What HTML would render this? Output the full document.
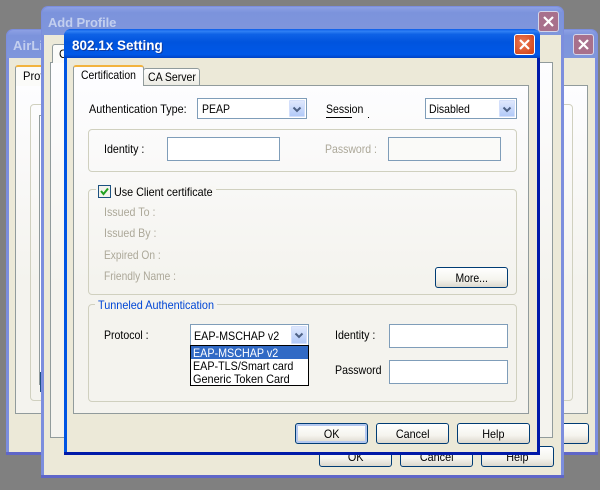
<!DOCTYPE html>
<html><head><meta charset="utf-8">
<style>
html,body{margin:0;padding:0}
body{width:600px;height:490px;background:#808080;position:relative;overflow:hidden;font:12px "Liberation Sans",sans-serif;color:#000}
div{position:absolute;box-sizing:border-box}
.t{white-space:nowrap;line-height:14px;height:14px;transform-origin:0 50%}
.d{color:#ACA899}
.win{border-radius:7px 7px 0 0}
.x{border:1px solid #fff;border-radius:3px}
.x svg{position:absolute;left:0;top:0}
.grp{border:1px solid #D0D0BF;border-radius:4px}
.inp{background:#fff;border:1px solid #7F9DB9}
.sel{background:#fff;border:1px solid #7F9DB9}
.sb{top:1px;bottom:1px;right:1px;width:16px;background:linear-gradient(#DFE8FD,#B2CAF8);border:1px solid #D3DFFB;border-radius:1px}
.sb svg{position:absolute;left:1px;top:3px}
.btn{border:1px solid #003C74;border-radius:3px;background:linear-gradient(#fff 0,#F5F4EE 60%,#DCD8CE 100%);text-align:center;line-height:21px;height:21px;width:73px}
.btn span{display:inline-block;transform:scaleX(.9)}
</style></head><body>

<!-- back window -->
<div class="win" style="left:6px;top:29px;width:592px;height:426px;background:#7C8EDE"></div>
<div style="left:6px;top:452px;width:592px;height:3px;background:#5F66C8"></div>
<div style="left:9px;top:58px;width:586px;height:394px;background:#ECE9D8"></div>
<div class="win" style="left:7px;top:30px;width:590px;height:28px;background:linear-gradient(#8CA0E4,#7C93DC 20%,#7F96DC)"></div>
<div class="t" style="left:13px;top:39px;color:#C3CFEF;font-weight:bold;font-size:13px;letter-spacing:.1px">AirLink</div>
<div class="x" style="left:573px;top:34px;width:21px;height:21px;background:#A8708C;border-color:#D5D5E8"><svg width="19" height="19"><path d="M5 5l9 9M14 5l-9 9" stroke="#fff" stroke-width="2.2"/></svg></div>
<div style="left:15px;top:85px;width:573px;height:329px;background:linear-gradient(#FDFDFF,#F4F3EE 60%);border:1px solid #919B9C"></div>
<div style="left:15px;top:65px;width:40px;height:21px;background:#FBFBF9;border:1px solid #919B9C;border-bottom:0;border-top:2px solid #F2B33E;border-radius:3px 3px 0 0"></div>
<div class="t" style="left:23px;top:69px;transform:scaleX(.93)">Prof</div>
<div class="grp" style="left:30px;top:104px;width:543px;height:297px"></div>
<div style="left:39px;top:115px;width:30px;height:270px;border:1px solid #919B9C;background:#fff"></div>
<div style="left:40px;top:372px;width:10px;height:20px;background:#1D4F86"></div>
<div class="btn" style="left:516px;top:423px"></div>

<!-- add profile -->
<div class="win" style="left:41px;top:6px;width:523px;height:472px;background:#7C8EDE"></div>
<div style="left:41px;top:475px;width:523px;height:3px;background:#5F66C8"></div>
<div style="left:44px;top:35px;width:517px;height:440px;background:#ECE9D8"></div>
<div class="win" style="left:42px;top:7px;width:521px;height:28px;background:linear-gradient(#8CA0E4,#7C93DC 20%,#7F96DC)"></div>
<div class="t" style="left:48px;top:16px;color:#C3CFEF;font-weight:bold;font-size:13px;letter-spacing:-.1px">Add Profile</div>
<div class="x" style="left:538px;top:11px;width:21px;height:21px;background:#A8708C;border-color:#D5D5E8"><svg width="19" height="19"><path d="M5 5l9 9M14 5l-9 9" stroke="#fff" stroke-width="2.2"/></svg></div>
<div style="left:50px;top:62px;width:503px;height:376px;background:linear-gradient(#FDFDFF,#F4F3EE 60%);border:1px solid #919B9C"></div>
<div style="left:52px;top:44px;width:40px;height:19px;background:#FBFBF9;border:1px solid #919B9C;border-bottom:0;border-radius:3px 3px 0 0"></div>
<div class="t" style="left:59px;top:47px;transform:scaleX(.93)">C</div>
<div class="btn" style="left:319px;top:446px"><span>OK</span></div>
<div class="btn" style="left:400px;top:446px"><span>Cancel</span></div>
<div class="btn" style="left:481px;top:446px"><span>Help</span></div>

<!-- main -->
<div class="win" style="left:64px;top:29px;width:476px;height:426px;background:#0054E3"></div>
<div style="left:537px;top:50px;width:3px;height:405px;background:#0019A8"></div>
<div style="left:64px;top:452px;width:476px;height:3px;background:#0019A8"></div>
<div style="left:67px;top:58px;width:470px;height:394px;background:#ECE9D8"></div>
<div class="win" style="left:64px;top:29px;width:476px;height:29px;background:linear-gradient(#0A5BE8 0,#2F80F4 8%,#0F62E6 18%,#0054DE 45%,#0058E8 88%,#0042C4 100%)"></div>
<div class="t" style="left:72px;top:39px;color:#fff;font-weight:bold;font-size:13.5px;text-shadow:1px 1px 0 #0F3CA0">802.1x Setting</div>
<div class="x" style="left:514px;top:34px;width:21px;height:21px;background:radial-gradient(circle at 40% 40%,#EC7A55,#D4491E 80%)"><svg width="19" height="19"><path d="M5 5l9 9M14 5l-9 9" stroke="#fff" stroke-width="2.2"/></svg></div>

<div style="left:73px;top:85px;width:456px;height:329px;background:linear-gradient(#FDFDFF,#F4F3EE 60%);border:1px solid #919B9C"></div>
<div style="left:143px;top:68px;width:57px;height:18px;background:linear-gradient(#fff,#ECEBE3);border:1px solid #919B9C;border-radius:3px 3px 0 0"></div>
<div class="t" style="left:148px;top:70px;transform:scaleX(.875)">CA Server</div>
<div style="left:73px;top:65px;width:71px;height:21px;background:#FDFDFF;border:1px solid #919B9C;border-bottom:0;border-top:2px solid #F2B33E;border-radius:3px 3px 0 0"></div>
<div class="t" style="left:81px;top:68px;transform:scaleX(.867)">Certification</div>

<div class="t" style="left:89px;top:102px;transform:scaleX(.9)">Authentication Type:</div>
<div class="sel" style="left:197px;top:98px;width:110px;height:21px"><div class="t" style="left:4px;top:3px;transform:scaleX(.875)">PEAP</div><div class="sb"><svg width="12" height="12"><path d="M2.5 3.5L6 7l3.5-3.5" fill="none" stroke="#4D6185" stroke-width="2"/></svg></div></div>
<div class="t" style="left:326px;top:102px;transform:scaleX(.875)">Session</div>
<div style="left:326px;top:117px;width:26px;height:1px;background:#000"></div>
<div style="left:368px;top:117px;width:1px;height:1px;background:#000"></div>
<div class="sel" style="left:425px;top:98px;width:92px;height:21px"><div class="t" style="left:3px;top:3px;transform:scaleX(.875)">Disabled</div><div class="sb"><svg width="12" height="12"><path d="M2.5 3.5L6 7l3.5-3.5" fill="none" stroke="#4D6185" stroke-width="2"/></svg></div></div>

<div class="grp" style="left:88px;top:129px;width:429px;height:43px"></div>
<div class="t" style="left:104px;top:142px;transform:scaleX(.89)">Identity :</div>
<div class="inp" style="left:167px;top:137px;width:113px;height:24px"></div>
<div class="t d" style="left:325px;top:142px;transform:scaleX(.875)">Password :</div>
<div class="inp" style="left:388px;top:137px;width:113px;height:24px;background:#FAFAF8"></div>

<div class="grp" style="left:88px;top:189px;width:429px;height:106px"></div>
<div style="left:96px;top:186px;width:120px;height:8px;background:#F8F7F4"></div>
<div style="left:98px;top:185px;width:13px;height:13px;background:#F4F3EC;border:1px solid #1C5180"><svg width="11" height="11" style="position:absolute;left:0;top:0"><path d="M2 5l2.5 3L9 2.5" fill="none" stroke="#21A121" stroke-width="2"/></svg></div>
<div class="t" style="left:114px;top:185px;transform:scaleX(.896)">Use Client certificate</div>
<div class="t d" style="left:104px;top:205px;transform:scaleX(.89)">Issued To :</div>
<div class="t d" style="left:104px;top:226px;transform:scaleX(.883)">Issued By :</div>
<div class="t d" style="left:104px;top:248px;transform:scaleX(.85)">Expired On :</div>
<div class="t d" style="left:104px;top:269px;transform:scaleX(.85)">Friendly Name :</div>
<div class="btn" style="left:435px;top:267px"><span style="transform:scaleX(.867)">More...</span></div>

<div class="grp" style="left:88px;top:304px;width:429px;height:98px"></div>
<div style="left:95px;top:300px;width:122px;height:8px;background:#F4F3EE"></div>
<div class="t" style="left:98px;top:298px;color:#0046D5;transform:scaleX(.904)">Tunneled Authentication</div>
<div class="t" style="left:104px;top:328px;transform:scaleX(.88)">Protocol :</div>
<div class="sel" style="left:190px;top:324px;width:119px;height:22px"><div class="t" style="left:3px;top:4px;transform:scaleX(.896)">EAP-MSCHAP v2</div><div class="sb"><svg width="12" height="12"><path d="M2.5 3.5L6 7l3.5-3.5" fill="none" stroke="#4D6185" stroke-width="2"/></svg></div></div>
<div style="left:190px;top:345px;width:119px;height:41px;background:#fff;border:1px solid #000"></div>
<div style="left:191px;top:346px;width:117px;height:13px;background:#316AC5"></div>
<div class="t" style="left:193px;top:346px;color:#fff;transform:scaleX(.896)">EAP-MSCHAP v2</div>
<div class="t" style="left:193px;top:359px;transform:scaleX(.896)">EAP-TLS/Smart card</div>
<div class="t" style="left:193px;top:372px;transform:scaleX(.908)">Generic Token Card</div>
<div class="t" style="left:335px;top:328px;transform:scaleX(.89)">Identity :</div>
<div class="inp" style="left:389px;top:324px;width:119px;height:24px"></div>
<div class="t" style="left:335px;top:363px;transform:scaleX(.883)">Password</div>
<div class="inp" style="left:389px;top:360px;width:119px;height:24px"></div>

<div class="btn" style="left:295px;top:423px;box-shadow:inset 0 0 0 2px #B4C8F0"><span>OK</span></div>
<div class="btn" style="left:376px;top:423px"><span>Cancel</span></div>
<div class="btn" style="left:457px;top:423px"><span>Help</span></div>
</body></html>
